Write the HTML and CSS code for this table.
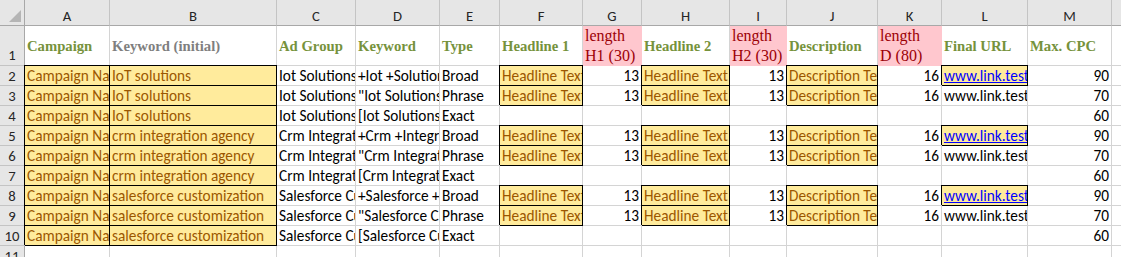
FILE: index.html
```html
<!DOCTYPE html>
<html lang="en">
<head>
<meta charset="utf-8">
<title>Ads sheet</title>
<link rel="stylesheet" href="styles.css">
</head>
<body>
<div class="sheet">
  <!-- column headers -->
  <div class="hd corner"><svg class="tri" width="12" height="12" viewBox="0 0 12 12"><polygon points="12,0 12,12 0,12" fill="#b5b5b5"/></svg></div>
  <div class="hd">A</div><div class="hd">B</div><div class="hd">C</div><div class="hd">D</div><div class="hd">E</div><div class="hd">F</div><div class="hd">G</div><div class="hd">H</div><div class="hd">I</div><div class="hd">J</div><div class="hd">K</div><div class="hd">L</div><div class="hd">M</div><div class="hd"></div>

  <!-- row 1 -->
  <div class="c rh rb">1</div>
  <div class="c t">Campaign</div>
  <div class="c t g">Keyword (initial)</div>
  <div class="c t">Ad Group</div>
  <div class="c t">Keyword</div>
  <div class="c t">Type</div>
  <div class="c t">Headline 1</div>
  <div class="c pk">length<br>H1 (30)</div>
  <div class="c t">Headline 2</div>
  <div class="c pk">length<br>H2 (30)</div>
  <div class="c t">Description</div>
  <div class="c pk">length<br>D (80)</div>
  <div class="c t">Final URL</div>
  <div class="c t">Max. CPC</div>
  <div class="c"></div>

  <!-- row 2 -->
  <div class="c rh">2</div>
  <div class="c y">Campaign Name</div><div class="c y">IoT solutions</div>
  <div class="c">Iot Solutions</div><div class="c">+Iot +Solutions</div><div class="c">Broad</div>
  <div class="c y">Headline Text</div><div class="c n">13</div>
  <div class="c y">Headline Text</div><div class="c n">13</div>
  <div class="c y">Description Text</div><div class="c n">16</div>
  <div class="c y"><a class="lk" href="#">www.link.test</a></div><div class="c n">90</div><div class="c"></div>

  <!-- row 3 -->
  <div class="c rh">3</div>
  <div class="c y">Campaign Name</div><div class="c y">IoT solutions</div>
  <div class="c">Iot Solutions</div><div class="c">"Iot Solutions"</div><div class="c">Phrase</div>
  <div class="c y">Headline Text</div><div class="c n">13</div>
  <div class="c y">Headline Text</div><div class="c n">13</div>
  <div class="c y">Description Text</div><div class="c n">16</div>
  <div class="c">www.link.test</div><div class="c n">70</div><div class="c"></div>

  <!-- row 4 -->
  <div class="c rh">4</div>
  <div class="c y">Campaign Name</div><div class="c y">IoT solutions</div>
  <div class="c">Iot Solutions</div><div class="c">[Iot Solutions]</div><div class="c">Exact</div>
  <div class="c"></div><div class="c"></div><div class="c"></div><div class="c"></div><div class="c"></div><div class="c"></div><div class="c"></div>
  <div class="c n">60</div><div class="c"></div>

  <!-- row 5 -->
  <div class="c rh">5</div>
  <div class="c y">Campaign Name</div><div class="c y">crm integration agency</div>
  <div class="c">Crm Integration Agency</div><div class="c">+Crm +Integration +Agency</div><div class="c">Broad</div>
  <div class="c y">Headline Text</div><div class="c n">13</div>
  <div class="c y">Headline Text</div><div class="c n">13</div>
  <div class="c y">Description Text</div><div class="c n">16</div>
  <div class="c y"><a class="lk" href="#">www.link.test</a></div><div class="c n">90</div><div class="c"></div>

  <!-- row 6 -->
  <div class="c rh">6</div>
  <div class="c y">Campaign Name</div><div class="c y">crm integration agency</div>
  <div class="c">Crm Integration Agency</div><div class="c">"Crm Integration Agency"</div><div class="c">Phrase</div>
  <div class="c y">Headline Text</div><div class="c n">13</div>
  <div class="c y">Headline Text</div><div class="c n">13</div>
  <div class="c y">Description Text</div><div class="c n">16</div>
  <div class="c">www.link.test</div><div class="c n">70</div><div class="c"></div>

  <!-- row 7 -->
  <div class="c rh">7</div>
  <div class="c y">Campaign Name</div><div class="c y">crm integration agency</div>
  <div class="c">Crm Integration Agency</div><div class="c">[Crm Integration Agency]</div><div class="c">Exact</div>
  <div class="c"></div><div class="c"></div><div class="c"></div><div class="c"></div><div class="c"></div><div class="c"></div><div class="c"></div>
  <div class="c n">60</div><div class="c"></div>

  <!-- row 8 -->
  <div class="c rh">8</div>
  <div class="c y">Campaign Name</div><div class="c y">salesforce customization</div>
  <div class="c">Salesforce Customization</div><div class="c">+Salesforce +Customization</div><div class="c">Broad</div>
  <div class="c y">Headline Text</div><div class="c n">13</div>
  <div class="c y">Headline Text</div><div class="c n">13</div>
  <div class="c y">Description Text</div><div class="c n">16</div>
  <div class="c y"><a class="lk" href="#">www.link.test</a></div><div class="c n">90</div><div class="c"></div>

  <!-- row 9 -->
  <div class="c rh">9</div>
  <div class="c y">Campaign Name</div><div class="c y">salesforce customization</div>
  <div class="c">Salesforce Customization</div><div class="c">"Salesforce Customization"</div><div class="c">Phrase</div>
  <div class="c y">Headline Text</div><div class="c n">13</div>
  <div class="c y">Headline Text</div><div class="c n">13</div>
  <div class="c y">Description Text</div><div class="c n">16</div>
  <div class="c">www.link.test</div><div class="c n">70</div><div class="c"></div>

  <!-- row 10 -->
  <div class="c rh">10</div>
  <div class="c y">Campaign Name</div><div class="c y">salesforce customization</div>
  <div class="c">Salesforce Customization</div><div class="c">[Salesforce Customization]</div><div class="c">Exact</div>
  <div class="c"></div><div class="c"></div><div class="c"></div><div class="c"></div><div class="c"></div><div class="c"></div><div class="c"></div>
  <div class="c n">60</div><div class="c"></div>

  <!-- row 11 -->
  <div class="c rh">11</div>
  <div class="c"></div><div class="c"></div><div class="c"></div><div class="c"></div><div class="c"></div><div class="c"></div><div class="c"></div>
  <div class="c"></div><div class="c"></div><div class="c"></div><div class="c"></div><div class="c"></div><div class="c"></div><div class="c"></div>
</div>
</body>
</html>
```

FILE: styles.css
```css
* {
  box-sizing: border-box;
}

html, body {
  margin: 0;
  padding: 0;
  background: #ffffff;
  overflow: hidden;
}

body {
  font-family: "Carlito", "Lato", "Liberation Sans", sans-serif;
  font-size: 15.3px;
  color: #000000;
}

.sheet {
  display: grid;
  grid-template-columns: 25px 85px 167px 79px 84px 60px 83px 59px 88px 57px 91px 64px 86px 84px 30px;
  grid-template-rows: 26px 40px repeat(10, 20px);
  width: 1151px;
}

/* column headers */
.hd {
  background: #e6e6e6;
  border-right: 1px solid #c4c4c4;
  border-bottom: 1px solid #a8a8a8;
  color: #262626;
  font-size: 14.7px;
  text-align: center;
  line-height: 18px;
  padding-top: 7px;
  overflow: hidden;
  white-space: nowrap;
}

.corner {
  border-right-color: #a8a8a8;
  display: flex;
  align-items: flex-end;
  justify-content: flex-end;
  padding: 0 3px 3px 0;
}

.tri {
  display: block;
}

/* generic cell */
.c {
  background: #ffffff;
  border-right: 1px solid #d4d4d4;
  border-bottom: 1px solid #d4d4d4;
  overflow: hidden;
  white-space: nowrap;
  padding: 1px 2px 0 2px;
  line-height: 18px;
}

/* row headers */
.rh {
  background: #e6e6e6;
  border-right: 1px solid #a8a8a8;
  border-bottom-color: #c4c4c4;
  color: #262626;
  font-size: 14.7px;
  text-align: center;
  padding: 1px 0 0 0;
}

.rb {
  display: flex;
  align-items: flex-end;
  justify-content: center;
  padding: 0 0 1px 0;
}

/* row 1 titles */
.t {
  display: flex;
  align-items: center;
  font-family: "Liberation Serif", "Times New Roman", serif;
  font-weight: bold;
  font-size: 14.7px;
  line-height: 20px;
  color: #76923c;
  padding: 0 2px;
}

.g {
  color: #7f7f7f;
}

.pk {
  background: #ffc7ce;
  border-right-color: #ffc7ce;
  border-bottom-color: #ffc7ce;
  color: #9c0006;
  font-family: "Liberation Serif", "Times New Roman", serif;
  font-size: 16px;
  line-height: 20px;
  padding: 0 2px;
}

/* yellow bordered cells */
.y {
  background: #ffeb9c;
  color: #9c5700;
  border-right-color: #000000;
  border-bottom-color: #000000;
  box-shadow: -1px -1px 0 #000000, 0 -1px 0 #000000;
}

.n {
  text-align: right;
}

.lk {
  color: #0000ff;
  text-decoration: underline;
}
```
